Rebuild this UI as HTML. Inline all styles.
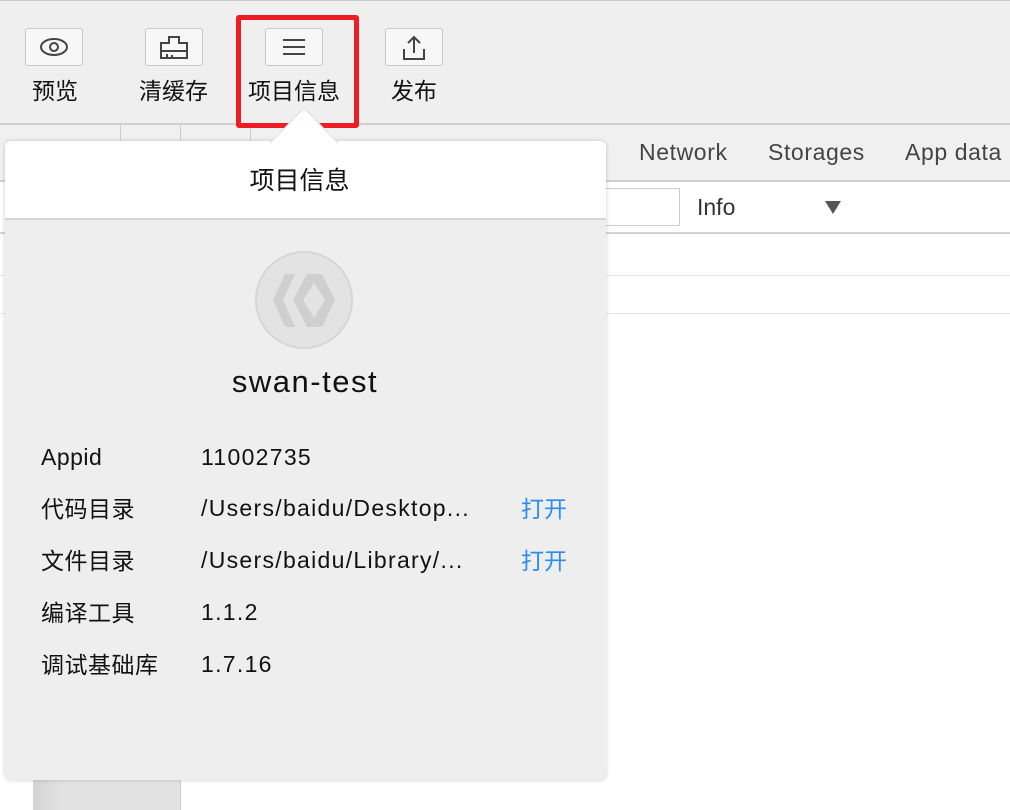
<!DOCTYPE html><html><head><meta charset="utf-8"><style>
body{margin:0;width:1010px;height:810px;background:#fff;position:relative;overflow:hidden;font-family:"Liberation Sans","Noto Sans CJK SC",sans-serif;}
.a{position:absolute}
.btn{position:absolute;top:28px;width:58px;height:38px;border:1px solid #c8c8c8;border-radius:3px;background:#f7f7f7;box-sizing:border-box}
.lbl{position:absolute;top:72px;font-size:23px;color:#111}
.row{position:absolute;left:41px;font-size:23px;color:#111;letter-spacing:0.5px}
.row.c{margin-top:-5px}
.v{position:absolute;left:201px;font-size:23px;color:#111;letter-spacing:1.3px}
.o{position:absolute;left:521px;font-size:23px;color:#2a8ef0;margin-top:-5px}
</style></head><body>
<div class="a" style="left:0;top:0;width:1010px;height:125px;background:#efefef;border-top:1px solid #ccc;border-bottom:2px solid #d0d0d0;box-sizing:border-box"></div>
<div class="a" style="left:0;top:125px;width:1010px;height:55px;background:#f0f0f0;border-bottom:2px solid #d0d0d0"></div>
<div class="a" style="left:120px;top:125px;width:1px;height:55px;background:#ccc"></div>
<div class="a" style="left:180px;top:125px;width:1px;height:55px;background:#ccc"></div>
<div class="a" style="left:250px;top:125px;width:1px;height:20px;background:#ccc"></div>
<div class="a" style="left:639px;top:139px;font-size:23px;color:#444;letter-spacing:0.6px">Network</div>
<div class="a" style="left:768px;top:139px;font-size:23px;color:#444;letter-spacing:0.6px">Storages</div>
<div class="a" style="left:905px;top:139px;font-size:23px;color:#444;letter-spacing:0.6px">App data</div>
<div class="a" style="left:560px;top:188px;width:120px;height:38px;border:1px solid #ccc;box-sizing:border-box;background:#fff"></div>
<div class="a" style="left:697px;top:194px;font-size:23px;color:#333">Info</div>
<div class="a" style="left:825px;top:201px;width:0;height:0;border-left:8px solid transparent;border-right:8px solid transparent;border-top:13px solid #555"></div>
<div class="a" style="left:0;top:232px;width:1010px;height:2px;background:#d4d4d4"></div>
<div class="a" style="left:0;top:275px;width:1010px;height:1px;background:#e6e6e6"></div>
<div class="a" style="left:0;top:313px;width:1010px;height:1px;background:#e6e6e6"></div>
<div class="a" style="left:33px;top:770px;width:147px;height:40px;background:linear-gradient(90deg,#d4d4d4,#e2e2e2 20%);border-right:1px solid #ccc"></div>
<div class="btn" style="left:25px"><svg width="56" height="36"><ellipse cx="28" cy="18" rx="13" ry="8" fill="none" stroke="#444" stroke-width="2"/><circle cx="28" cy="18" r="4" fill="none" stroke="#444" stroke-width="2"/></svg></div>
<div class="btn" style="left:145px"><svg width="56" height="36"><path d="M23 8h10v6h8v8H15v-8h8z M15 22v7h26v-7 M21 29v-4 M26 29v-3" fill="none" stroke="#444" stroke-width="2"/></svg></div>
<div class="btn" style="left:265px"><svg width="56" height="36"><path d="M17 11h22M17 18h22M17 25h22" stroke="#444" stroke-width="2"/></svg></div>
<div class="btn" style="left:385px"><svg width="56" height="36"><path d="M28 24V8M22 14l6-6 6 6M18 20v10h20V20" fill="none" stroke="#444" stroke-width="2"/></svg></div>
<div class="lbl" style="left:32px">预览</div>
<div class="lbl" style="left:139px">清缓存</div>
<div class="lbl" style="left:248px">项目信息</div>
<div class="lbl" style="left:391px">发布</div>
<div class="a" style="left:236px;top:15px;width:123px;height:113px;border:5px solid #ee1c25;border-radius:3px;box-sizing:border-box"></div>
<div class="a" style="left:5px;top:141px;width:601px;height:639px;background:#eeeeee;border-radius:6px;box-shadow:0 0 4px rgba(0,0,0,.2);overflow:hidden">
<div style="height:77px;background:#fff;border-bottom:2px solid #d6d6d6;text-align:center;font-size:25px;line-height:80px;color:#111;margin-left:-12px"><span style="position:relative;top:0px">项目信息</span></div>
</div>
<svg class="a" style="left:268px;top:105px" width="72" height="40"><path d="M0 40L36 3L72 40Z" fill="#fff"/><path d="M2 38L36 3L70 38" fill="none" stroke="#ddd"/></svg>
<svg class="a" style="left:250px;top:246px" width="110" height="110"><circle cx="54" cy="54" r="48" fill="#e3e3e3" stroke="#d6d6d6" stroke-width="2"/><g transform="translate(-250,-246)" fill="#cfcfcf"><path d="M285 274h10l-12 26 12 27h-10l-12-27z"/><path fill-rule="evenodd" d="M307 274h15l13 26-13 27h-15l-14-27z M314 283l-11 17 11 18 11-18z"/></g></svg>
<div class="a" style="left:0;width:610px;top:364px;text-align:center;font-size:31px;color:#111;letter-spacing:1.5px">swan-test</div>
<div class="row" style="top:444px">Appid</div><div class="v" style="top:444px">11002735</div>
<div class="row c" style="top:495px">代码目录</div><div class="v" style="top:495px">/Users/baidu/Desktop...</div><div class="o" style="top:495px">打开</div>
<div class="row c" style="top:547px">文件目录</div><div class="v" style="top:547px">/Users/baidu/Library/...</div><div class="o" style="top:547px">打开</div>
<div class="row c" style="top:599px">编译工具</div><div class="v" style="top:599px">1.1.2</div>
<div class="row c" style="top:651px">调试基础库</div><div class="v" style="top:651px">1.7.16</div>
</body></html>
